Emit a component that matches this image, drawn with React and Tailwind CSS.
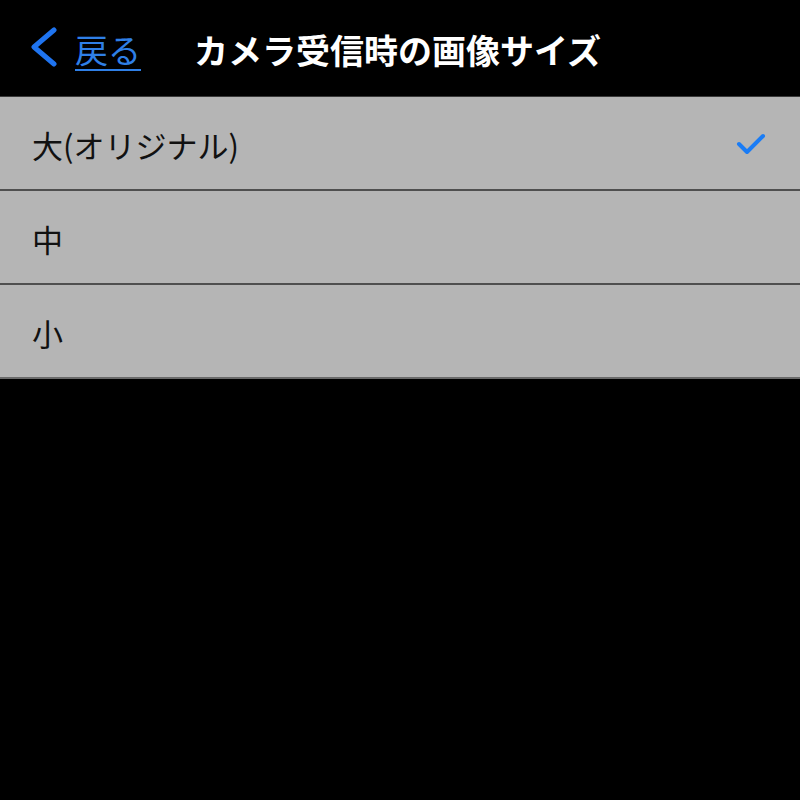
import React from "react";

const font = { fontFamily: '"Noto Sans CJK JP", "Noto Sans", sans-serif' };

function Row({ label, checked, last }) {
  return (
    <div className={`h-[94px] flex items-center justify-between pl-[32px] pr-[34px] bg-[#b5b5b5] border-b-2 ${last ? "border-[#6a6a6a]" : "border-[#4f4f4f]"}`}>
      <span className="text-[31px] text-[#111] leading-none pt-[3px]">{label}</span>
      {checked && (
        <svg width="30" height="24" viewBox="0 0 30 24" className="mt-[1px]">
          <path d="M3 12 L11 20 L27 4" fill="none" stroke="#1a7cf5" strokeWidth="4" strokeLinecap="round" strokeLinejoin="round" />
        </svg>
      )}
    </div>
  );
}

export default function App() {
  return (
    <div className="w-[800px] h-[800px] bg-black" style={font}>
      <div className="h-[97px] flex items-center border-b border-[#3a3a3a] relative pt-[4px]">
        <div className="flex items-center pl-[28px]">
          <svg width="32" height="42" viewBox="0 0 32 42" className="-mt-[4px]">
            <path d="M26 3 L6 20 L26 37" fill="none" stroke="#1f74f0" strokeWidth="5" strokeLinecap="round" strokeLinejoin="round" />
          </svg>
          <span className="ml-[15px] text-[33px] leading-none text-[#2f7fe6] underline underline-offset-[6px] decoration-2 pb-[2px]">戻る</span>
        </div>
        <span className="ml-[53px] text-[34px] leading-none font-bold text-white">カメラ受信時の画像サイズ</span>
      </div>
      <Row label="大(オリジナル)" checked />
      <Row label="中" />
      <Row label="小" last />
    </div>
  );
}
